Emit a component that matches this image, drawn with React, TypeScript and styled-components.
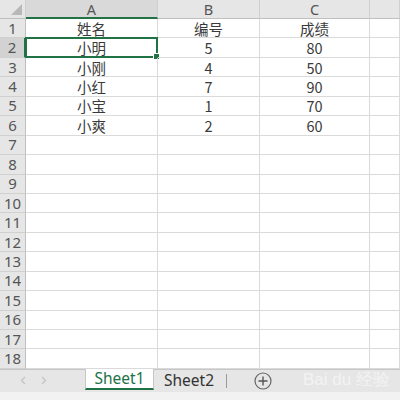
import React from "react";
import styled, { createGlobalStyle } from "styled-components";

const Global = createGlobalStyle`
  html, body { margin: 0; padding: 0; background: #fff; overflow: hidden; }
  body { font-family: "Noto Sans CJK SC", "Noto Sans", sans-serif; }
`;

const Page = styled.div`
  width: 400px;
  height: 400px;
  display: flex;
  flex-direction: column;
  position: relative;
  overflow: hidden;
  background: #fff;
`;

const Grid = styled.div`
  display: grid;
  grid-template-columns: 26px 132px 102px 110px 1fr;
  grid-template-rows: 19px repeat(18, 19.45px);
  flex: none;
`;

const Corner = styled.div`
  background: #e6e6e6;
  border-right: 1px solid #cfcfcf;
  border-bottom: 1px solid #bfbfbf;
  box-sizing: border-box;
  display: flex;
  align-items: flex-end;
  justify-content: flex-end;
  padding: 0 3px 3px 0;
`;

const ColHead = styled.div<{ $active?: boolean }>`
  background: ${(p) => (p.$active ? "#d9d9d9" : "#e6e6e6")};
  border-right: 1px solid #cfcfcf;
  border-bottom: ${(p) => (p.$active ? "2px solid #217346" : "1px solid #bfbfbf")};
  box-sizing: border-box;
  display: flex;
  align-items: center;
  justify-content: center;
  font-family: "Noto Sans", sans-serif;
  font-size: 14.5px;
  color: #555;
  line-height: 16px;
`;

const RowHead = styled.div<{ $active?: boolean }>`
  background: ${(p) => (p.$active ? "#d2d2d2" : "#e6e6e6")};
  border-right: ${(p) => (p.$active ? "2px solid #217346" : "1px solid #bfbfbf")};
  border-bottom: 1px solid #d0d0d0;
  box-sizing: border-box;
  display: flex;
  align-items: center;
  justify-content: center;
  font-family: "Noto Sans", sans-serif;
  font-size: 15px;
  color: #555;
  line-height: 17px;
`;

const Cell = styled.div`
  position: relative;
  border-right: 1px solid #dadada;
  border-bottom: 1px solid #dadada;
  box-sizing: border-box;
  display: flex;
  align-items: center;
  justify-content: center;
  font-size: 14.5px;
  color: #3a3a3a;
  line-height: 17px;
  white-space: nowrap;
`;

const Selection = styled.div`
  position: absolute;
  left: -1px;
  top: -1px;
  right: -1px;
  bottom: -1px;
  border: 2px solid #217346;
  pointer-events: none;
`;

const Handle = styled.div`
  position: absolute;
  right: -4px;
  bottom: -4px;
  width: 5px;
  height: 5px;
  background: #217346;
  border: 1px solid #fff;
`;

const TabBar = styled.div`
  height: 23px;
  flex: none;
  display: flex;
  align-items: stretch;
  background: #e6e6e6;
  border-top: 1px solid #c6c6c6;
  box-sizing: border-box;
`;

const Nav = styled.div`
  width: 85px;
  display: flex;
  align-items: center;
  padding-left: 20px;
  gap: 15px;
  box-sizing: border-box;
`;

const Tab = styled.div<{ $active?: boolean }>`
  width: ${(p) => (p.$active ? "69px" : "auto")};
  padding: ${(p) => (p.$active ? "0" : "0 10px")};
  margin-top: -1px;
  display: flex;
  align-items: center;
  justify-content: center;
  font-family: "Noto Sans", sans-serif;
  font-size: 15.5px;
  line-height: 18px;
  color: ${(p) => (p.$active ? "#217346" : "#333")};
  background: ${(p) => (p.$active ? "#fff" : "transparent")};
  border-left: ${(p) => (p.$active ? "1px solid #c6c6c6" : "none")};
  border-right: ${(p) => (p.$active ? "1px solid #c6c6c6" : "none")};
  border-bottom: ${(p) => (p.$active ? "2px solid #217346" : "none")};
  box-sizing: border-box;
  height: ${(p) => (p.$active ? "21px" : "22px")};
`;

const Sep = styled.div`
  width: 1px;
  height: 14px;
  background: #9a9a9a;
  align-self: center;
  margin-left: 2px;
`;

const AddBtn = styled.div`
  margin-left: 27px;
  align-self: center;
  display: flex;
`;

const Bottom = styled.div`
  flex: 1;
  background: #f2f2f2;
`;

const Watermark = styled.div`
  position: absolute;
  left: 303px;
  top: 371px;
  font-family: "Liberation Sans", sans-serif;
  font-size: 17px;
  line-height: 18px;
  color: rgba(255, 255, 255, 0.55);
  pointer-events: none;
`;

const cols = ["A", "B", "C", "D"];
const data: (string | number)[][] = [
  ["姓名", "编号", "成绩"],
  ["小明", 5, 80],
  ["小刚", 4, 50],
  ["小红", 7, 90],
  ["小宝", 1, 70],
  ["小爽", 2, 60],
];

export default function App() {
  const rows = Array.from({ length: 18 }, (_, i) => i + 1);
  return (
    <Page>
      <Global />
      <Grid>
        <Corner>
          <svg width="11" height="11" viewBox="0 0 11 11">
            <polygon points="11,0 11,11 0,11" fill="#b8b8b8" />
          </svg>
        </Corner>
        {cols.map((c) => (
          <ColHead key={c} $active={c === "A"}>
            {c === "D" ? "" : c}
          </ColHead>
        ))}
        {rows.map((r) => (
          <React.Fragment key={r}>
            <RowHead $active={r === 2}>{r}</RowHead>
            {cols.map((c, ci) => (
              <Cell key={c}>
                {data[r - 1] && data[r - 1][ci] !== undefined ? data[r - 1][ci] : ""}
                {r === 2 && ci === 0 && (
                  <Selection>
                    <Handle />
                  </Selection>
                )}
              </Cell>
            ))}
          </React.Fragment>
        ))}
      </Grid>
      <TabBar>
        <Nav>
          <svg width="6" height="9" viewBox="0 0 6 9">
            <path d="M5 1 L1.5 4.5 L5 8" fill="none" stroke="#c4c4c4" strokeWidth="1.3" />
          </svg>
          <svg width="6" height="9" viewBox="0 0 6 9">
            <path d="M1 1 L4.5 4.5 L1 8" fill="none" stroke="#c4c4c4" strokeWidth="1.3" />
          </svg>
        </Nav>
        <Tab $active>Sheet1</Tab>
        <Tab>Sheet2</Tab>
        <Sep />
        <AddBtn>
          <svg width="18" height="18" viewBox="0 0 18 18">
            <circle cx="9" cy="9" r="8" fill="none" stroke="#666" strokeWidth="1.2" />
            <path d="M9 4.5 V13.5 M4.5 9 H13.5" stroke="#555" strokeWidth="1.4" />
          </svg>
        </AddBtn>
      </TabBar>
      <Bottom />
      <Watermark>Bai du 经验</Watermark>
    </Page>
  );
}
